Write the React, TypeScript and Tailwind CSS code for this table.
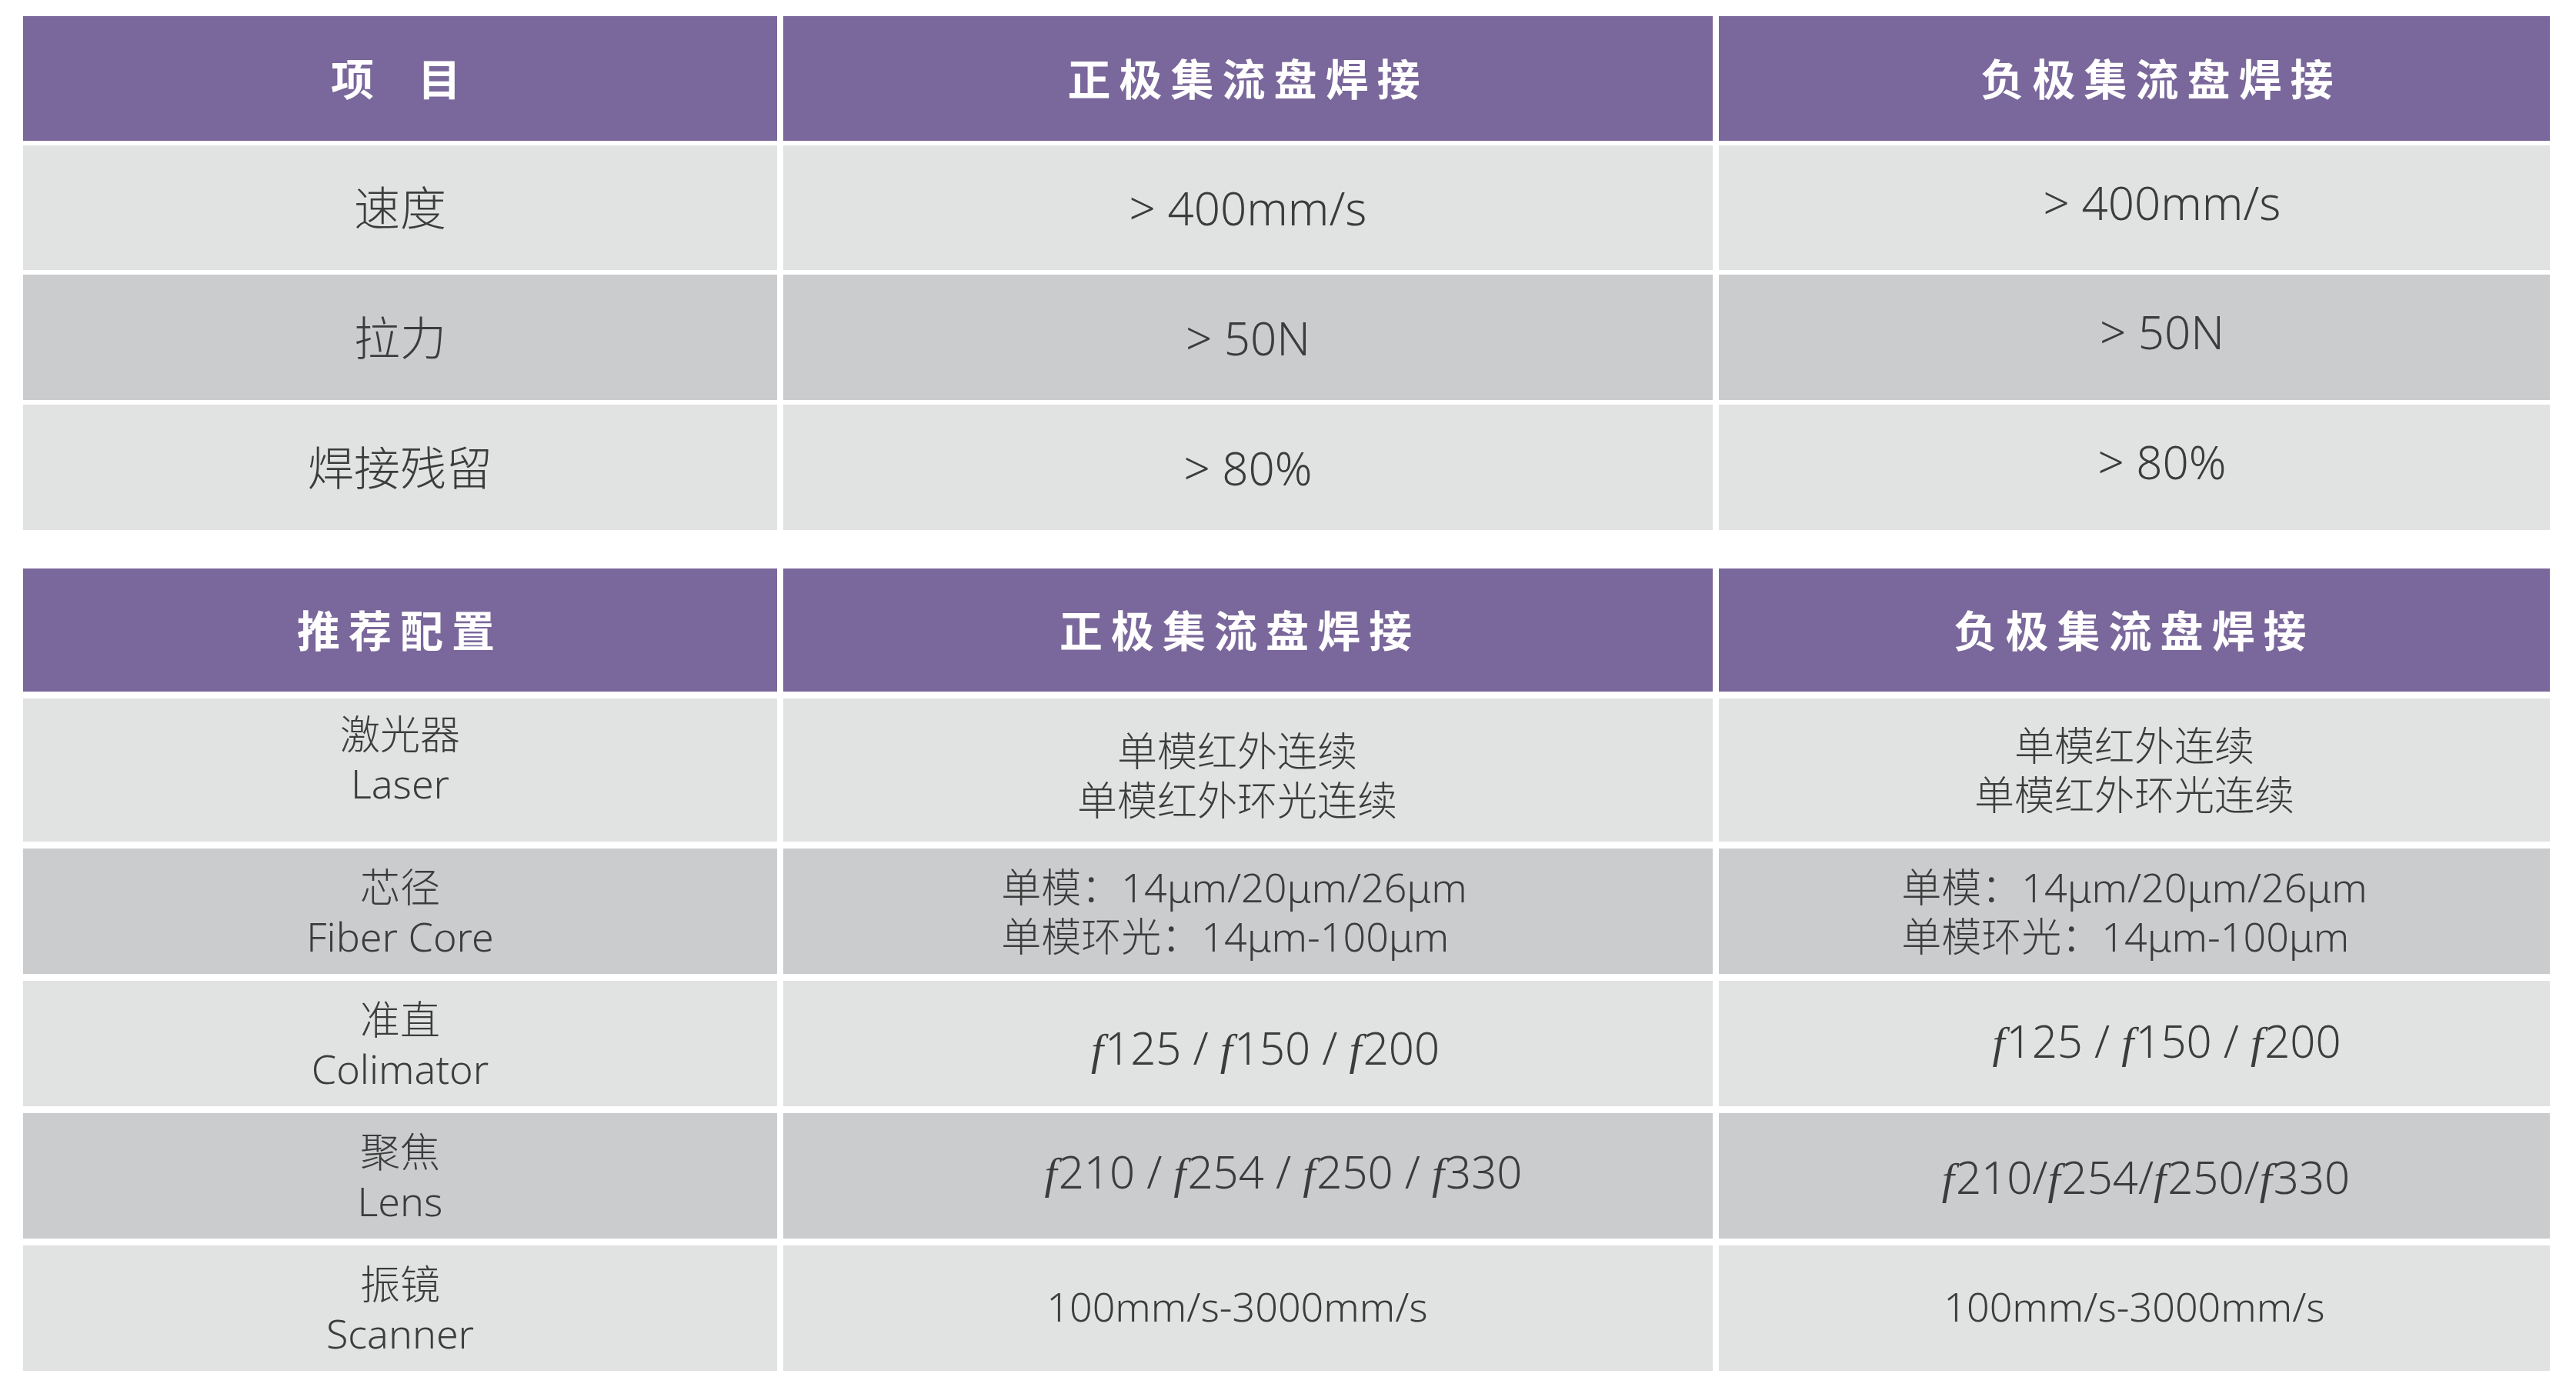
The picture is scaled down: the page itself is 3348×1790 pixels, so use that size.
import React from "react";
import clsx from "clsx";

type Tone = "head" | "light" | "dark";

function Cell({
  tone,
  className,
  children,
}: {
  tone: Tone;
  className?: string;
  children: React.ReactNode;
}) {
  return (
    <div
      className={clsx(
        "flex items-center justify-center text-center",
        tone === "head" && "bg-[#7a679b] text-white font-bold text-[56px] tracking-[11px]",
        tone === "light" && "bg-[#e1e2e2] text-[#3c3c3c] font-light",
        tone === "dark" && "bg-[#cbcccd] text-[#3c3c3c] font-light",
        className,
      )}
    >
      {children}
    </div>
  );
}

// italic serif f used for focal lengths
function F() {
  return <span className="font-['Liberation_Serif',serif] italic font-normal pr-[2px]">f</span>;
}

function Focal({ values, sep }: { values: string[]; sep: string }) {
  return (
    <span>
      {values.map((v, i) => (
        <React.Fragment key={v + i}>
          {i > 0 && sep}
          <F />
          {v}
        </React.Fragment>
      ))}
    </span>
  );
}

function TwoLine({ a, b }: { a: string; b: string }) {
  return (
    <div className="flex flex-col items-center">
      <span>{a}</span>
      <span>{b}</span>
    </div>
  );
}

export default function App() {
  return (
    <div className="min-h-[1790px] bg-white pl-[30px] pt-[21px] font-['Noto_Sans','Noto_Sans_CJK_SC',sans-serif]">
      {/* performance table */}
      <div className="grid grid-cols-[980px_1208px_1080px] gap-x-[8px] gap-y-[6px]">
        <Cell tone="head" className="h-[162px] tracking-[0px]">
          <span>项</span>
          <span className="ml-[46px]">目</span>
        </Cell>
        <Cell tone="head" className="h-[162px]">正极集流盘焊接</Cell>
        <Cell tone="head" className="h-[162px] pl-[70px]">负极集流盘焊接</Cell>

        <Cell tone="light" className="h-[162px] text-[60px]">速度</Cell>
        <Cell tone="light" className="h-[162px] text-[60px]">&gt; 400mm/s</Cell>
        <Cell tone="light" className="h-[162px] text-[60px] pl-[72px] pb-[15px]">&gt; 400mm/s</Cell>

        <Cell tone="dark" className="h-[163px] text-[60px]">拉力</Cell>
        <Cell tone="dark" className="h-[163px] text-[60px]">&gt; 50N</Cell>
        <Cell tone="dark" className="h-[163px] text-[60px] pl-[72px] pb-[15px]">&gt; 50N</Cell>

        <Cell tone="light" className="h-[163px] text-[60px]">焊接残留</Cell>
        <Cell tone="light" className="h-[163px] text-[60px]">&gt; 80%</Cell>
        <Cell tone="light" className="h-[163px] text-[60px] pl-[72px] pb-[15px]">&gt; 80%</Cell>
      </div>

      {/* recommended configuration */}
      <div className="mt-[50px] grid grid-cols-[980px_1208px_1080px] gap-x-[8px] gap-y-[9px] text-[52px] leading-[64px]">
        <Cell tone="head" className="h-[160px]">推荐配置</Cell>
        <Cell tone="head" className="h-[160px] pr-[21px]">正极集流盘焊接</Cell>
        <Cell tone="head" className="h-[160px]">负极集流盘焊接</Cell>

        <Cell tone="light" className="h-[186px] pb-[30px]">
          <TwoLine a="激光器" b="Laser" />
        </Cell>
        <Cell tone="light" className="h-[186px] pt-[14px] pr-[28px]">
          <TwoLine a="单模红外连续" b="单模红外环光连续" />
        </Cell>
        <Cell tone="light" className="h-[186px]">
          <TwoLine a="单模红外连续" b="单模红外环光连续" />
        </Cell>

        <Cell tone="dark" className="h-[163px]">
          <TwoLine a="芯径" b="Fiber Core" />
        </Cell>
        <Cell tone="dark" className="h-[163px] pr-[36px]">
          <div className="text-left">
            <div>单模：14μm/20μm/26μm</div>
            <div>单模环光：14μm-100μm</div>
          </div>
        </Cell>
        <Cell tone="dark" className="h-[163px]">
          <div className="text-left">
            <div>单模：14μm/20μm/26μm</div>
            <div>单模环光：14μm-100μm</div>
          </div>
        </Cell>

        <Cell tone="light" className="h-[163px]">
          <TwoLine a="准直" b="Colimator" />
        </Cell>
        <Cell tone="light" className="h-[163px] text-[58px] pt-[14px] pl-[45px]">
          <Focal values={["125", "150", "200"]} sep=" / " />
        </Cell>
        <Cell tone="light" className="h-[163px] text-[58px] pb-[4px] pl-[84px]">
          <Focal values={["125", "150", "200"]} sep=" / " />
        </Cell>

        <Cell tone="dark" className="h-[163px]">
          <TwoLine a="聚焦" b="Lens" />
        </Cell>
        <Cell tone="dark" className="h-[163px] text-[58px] pb-[8px] pl-[92px]">
          <Focal values={["210", "254", "250", "330"]} sep=" / " />
        </Cell>
        <Cell tone="dark" className="h-[163px] text-[58px] pt-[6px] pl-[30px]">
          <Focal values={["210", "254", "250", "330"]} sep="/" />
        </Cell>

        <Cell tone="light" className="h-[163px]">
          <TwoLine a="振镜" b="Scanner" />
        </Cell>
        <Cell tone="light" className="h-[163px] pb-[6px] pr-[28px]">100mm/s-3000mm/s</Cell>
        <Cell tone="light" className="h-[163px] pb-[6px]">100mm/s-3000mm/s</Cell>
      </div>
    </div>
  );
}
